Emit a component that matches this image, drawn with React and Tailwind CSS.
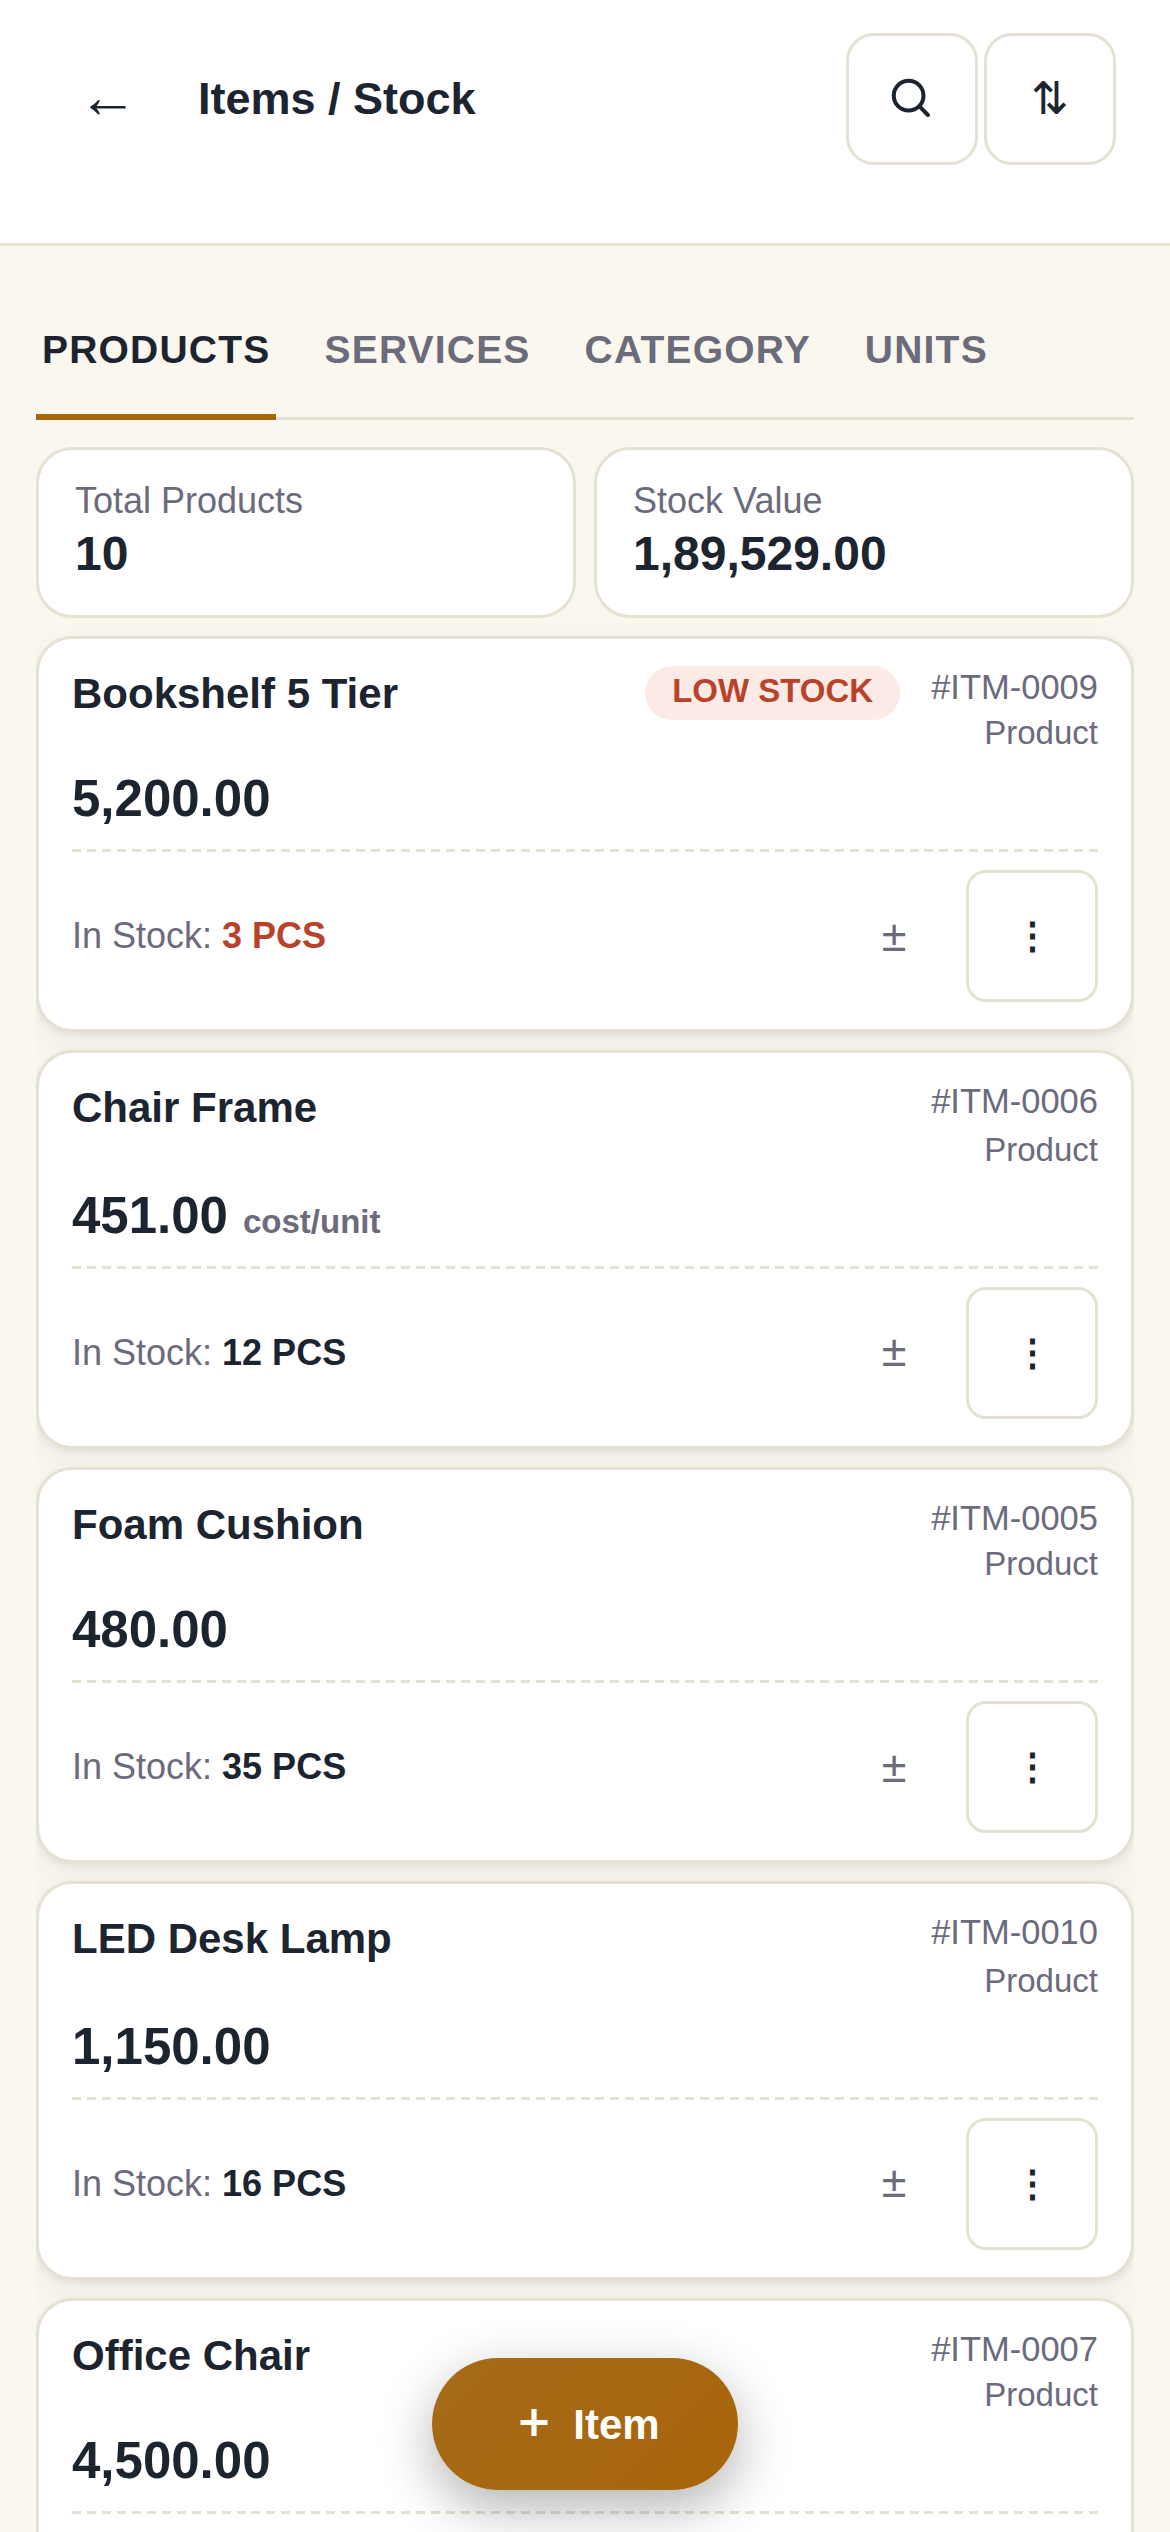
const items = [
  { name: 'Bookshelf 5 Tier', code: '#ITM-0009', price: '5,200.00', stock: '3 PCS', low: true },
  { name: 'Chair Frame', code: '#ITM-0006', price: '451.00', stock: '12 PCS', note: 'cost/unit' },
  { name: 'Foam Cushion', code: '#ITM-0005', price: '480.00', stock: '35 PCS' },
  { name: 'LED Desk Lamp', code: '#ITM-0010', price: '1,150.00', stock: '16 PCS' },
  { name: 'Office Chair', code: '#ITM-0007', price: '4,500.00' },
];

const tabs = ['PRODUCTS', 'SERVICES', 'CATEGORY', 'UNITS'];

function Header() {
  return (
    <header className="flex h-[246px] shrink-0 items-start border-b-[3px] border-[#e5e2d3] bg-white pt-[33px] pr-[54px] pl-[42px]">
      <button className="flex size-[132px] items-center justify-center pb-1 text-[60px] leading-none">←</button>
      <h1 className="ml-6 flex h-[132px] flex-1 items-center text-[45px] font-bold">Items / Stock</h1>
      <div className="flex gap-1.5">
        <button className="flex size-[132px] items-center justify-center rounded-[28px] border-[3px] border-[#e5e2d3]">
          <svg className="size-[54px]" viewBox="0 0 24 24" fill="none" stroke="currentColor" strokeWidth="1.8" strokeLinecap="round">
            <circle cx="10.5" cy="10.5" r="6.6" />
            <path d="m15.3 15.3 3.8 3.8" />
          </svg>
        </button>
        <button className="flex size-[132px] items-center justify-center rounded-[28px] border-[3px] border-[#e5e2d3] text-[45px]">
          ⇅
        </button>
      </div>
    </header>
  );
}

function Tabs() {
  return (
    <nav className="flex h-[138px] gap-[42px] border-b-[3px] border-[#e5e2d3]">
      {tabs.map((t, i) => (
        <button
          key={t}
          className={
            'mb-[-3px] flex items-center border-b-[6px] px-1.5 pt-1 text-[39px] font-bold tracking-[1.2px] ' +
            (i === 0 ? 'border-[#a8650a] text-[#1c2430]' : 'border-transparent text-[#6b6b7b]')
          }
        >
          {t}
        </button>
      ))}
    </nav>
  );
}

function Stat({ label, value }) {
  return (
    <div className="flex h-[171px] flex-1 flex-col rounded-[36px] border-[3px] border-[#e5e2d3] bg-white px-9 pt-[26px]">
      <div className="text-[36px] leading-[50px] text-[#6b6b7b]">{label}</div>
      <div className="text-[48px] leading-[56px] font-bold">{value}</div>
    </div>
  );
}

function ItemCard({ item, tall }) {
  return (
    <article
      className={
        'shrink-0 rounded-[36px] border-[3px] border-[#e5e2d3] bg-white px-[33px] pt-[24px] shadow-[0_3px_6px_rgba(28,60,48,0.08),0_12px_36px_rgba(20,40,44,0.05)] ' +
        (tall ? 'h-[399px]' : 'h-[396px]')
      }
    >
      <div className={'flex items-start ' + (tall ? 'h-[99px]' : 'h-[96px]')}>
        <h2 className="flex-1 pt-1 text-[42px] leading-[54px] font-bold">{item.name}</h2>
        {item.low && (
          <span className="mt-[3px] mr-[31px] flex h-[54px] items-center rounded-full bg-[#fceae6] px-[27px] pb-1 text-[33px] font-bold text-[#b8432a]">
            LOW STOCK
          </span>
        )}
        <div className="text-right text-[#6b6b7b]">
          <div className="text-[34.5px] leading-[48px]">{item.code}</div>
          <div className={'text-[33px] leading-[43px] ' + (tall ? 'mt-[3px]' : '')}>Product</div>
        </div>
      </div>
      <div className="flex h-[90px] items-baseline pt-[8px] text-[51px] leading-[64px] font-bold">
        {item.price}
        {item.note && <span className="ml-[15px] text-[33px] text-[#6b6b7b]">{item.note}</span>}
      </div>
      <div className="h-[3px] bg-[repeating-linear-gradient(90deg,#e5e2d3_0_9px,transparent_9px_14.956px)]" />
      {item.stock && (
        <div className="flex items-center pt-[18px]">
          <div className="flex-1 text-[36px] text-[#6b6b7b]">
            In Stock: <b className={item.low ? 'text-[#b8432a]' : 'text-[#1c2430]'}>{item.stock}</b>
          </div>
          <button className={'mr-[6px] flex size-[132px] items-center justify-center text-[45px] text-[#6b6b7b] ' + (tall ? 'pb-1' : '')}>
            ±
          </button>
          <button className="flex size-[132px] items-center justify-center rounded-[20px] border-[3px] border-[#e5e2d3] text-[37px] font-bold">
            ⋮
          </button>
        </div>
      )}
    </article>
  );
}

export default function App() {
  return (
    <div className="relative flex h-[2532px] w-[1170px] flex-col overflow-hidden bg-[#faf7ee] font-['Liberation_Sans',Arial,sans-serif] text-[#1c2430]">
      <Header />
      <main className="flex flex-col px-9 pt-[36px]">
        <Tabs />
        <section className="mt-[27px] flex gap-[18px]">
          <Stat label="Total Products" value="10" />
          <Stat label="Stock Value" value="1,89,529.00" />
        </section>
        <section className="mt-[18px] flex flex-col gap-[18px] overflow-x-clip">
          {items.map((item, i) => (
            <ItemCard key={item.code} item={item} tall={i % 2 === 1} />
          ))}
        </section>
      </main>
      <button className="absolute top-[2358px] left-[432px] flex h-[132px] w-[306px] items-center justify-center gap-[15px] rounded-full bg-linear-135 from-[#a66a18] to-[#a8650a] text-[42px] font-bold text-white shadow-[0_18px_54px_rgba(0,0,0,0.3)]">
        <svg className="size-[48px]" viewBox="0 0 48 48" fill="none" stroke="currentColor" strokeWidth="5.2">
          <path d="M24 9v27M10.5 22.5h27" />
        </svg>
        <span>Item</span>
      </button>
    </div>
  );
}
